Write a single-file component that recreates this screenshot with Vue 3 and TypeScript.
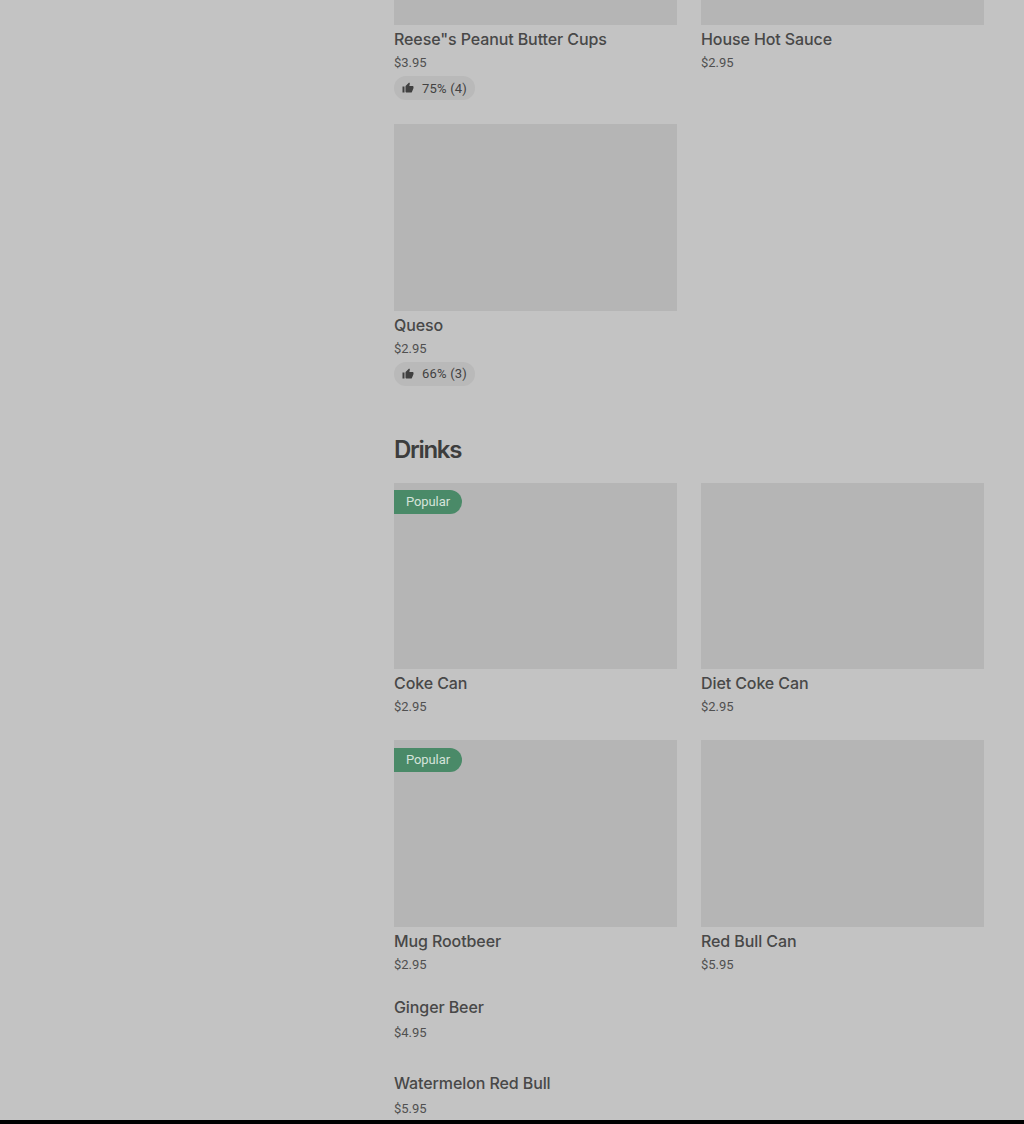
<script setup lang="ts">
interface MenuItem {
  name: string;
  price: string;
  popular?: boolean;
  rating?: string;
}

const snacks: MenuItem[] = [
  { name: 'Reese"s Peanut Butter Cups', price: '$3.95', rating: '75% (4)' },
  { name: 'House Hot Sauce', price: '$2.95' },
  { name: 'Queso', price: '$2.95', rating: '66% (3)' },
];

const drinks: MenuItem[] = [
  { name: 'Coke Can', price: '$2.95', popular: true },
  { name: 'Diet Coke Can', price: '$2.95' },
  { name: 'Mug Rootbeer', price: '$2.95', popular: true },
  { name: 'Red Bull Can', price: '$5.95' },
];

const plainDrinks: MenuItem[] = [
  { name: 'Ginger Beer', price: '$4.95' },
  { name: 'Watermelon Red Bull', price: '$5.95' },
];
</script>

<template>
  <div class="page">
    <main class="menu">
      <section class="grid">
        <article v-for="(item, i) in snacks" :key="item.name" class="card">
          <div class="photo" :class="{ cut: i < 2 }"></div>
          <h3 class="name">{{ item.name }}</h3>
          <p class="price">{{ item.price }}</p>
          <div v-if="item.rating" class="rating">
            <svg width="12" height="12" viewBox="0 0 24 24" fill="#404040">
              <path d="M1 21h4V9H1v12zm22-11c0-1.1-.9-2-2-2h-6.31l.95-4.57.03-.32c0-.41-.17-.79-.44-1.06L14.17 1 7.59 7.59C7.22 7.95 7 8.45 7 9v10c0 1.1.9 2 2 2h9c.83 0 1.54-.5 1.84-1.22l3.02-7.05c.09-.23.14-.47.14-.73v-2z" />
            </svg>
            <span>{{ item.rating }}</span>
          </div>
        </article>
      </section>

      <h2 class="heading">Drinks</h2>

      <section class="grid drinks">
        <article v-for="item in drinks" :key="item.name" class="card">
          <div class="photo">
            <span v-if="item.popular" class="badge">Popular</span>
          </div>
          <h3 class="name">{{ item.name }}</h3>
          <p class="price">{{ item.price }}</p>
        </article>
      </section>

      <section class="plain-list">
        <article v-for="item in plainDrinks" :key="item.name" class="plain">
          <h3 class="name">{{ item.name }}</h3>
          <p class="price">{{ item.price }}</p>
        </article>
      </section>
    </main>
  </div>
</template>

<style>
html,
body {
  margin: 0;
  background: #000;
}
</style>

<style scoped>
.page {
  height: 1120px;
  overflow: hidden;
  background: #c3c3c3;
  font-family: Roboto, "Liberation Sans", sans-serif;
  color: #424242;
}

.menu {
  width: 590px;
  margin-left: 394px;
}

.grid {
  display: grid;
  grid-template-columns: 283px 283px;
  column-gap: 24px;
  row-gap: 24px;
}

.drinks {
  row-gap: 25px;
}

.photo {
  position: relative;
  height: 186.75px;
  background: #b5b5b5;
}

.drinks .photo {
  height: 186.25px;
}

.photo.cut {
  height: 25px;
}

.name {
  margin: 4px 0 0;
  font-family: Inter, Roboto, sans-serif;
  font-size: 16px;
  line-height: 20px;
  font-weight: 500;
  letter-spacing: -0.1px;
  color: #484848;
}

.price {
  margin: 5px 0 0;
  font-size: 13px;
  line-height: 17.5px;
  color: #505050;
}

.rating {
  display: flex;
  width: fit-content;
  align-items: center;
  gap: 8px;
  height: 24px;
  margin-top: 4.5px;
  padding: 0 8px;
  border-radius: 12px;
  background: #b9b9b9;
  font-size: 13px;
  letter-spacing: 0.2px;
  color: #424242;
}

.badge {
  position: absolute;
  top: 7.7px;
  left: 0;
  height: 24px;
  padding: 0 12px;
  line-height: 24px;
  border-radius: 0 12px 12px 0;
  background: #4a8a68;
  color: #d5e3da;
  font-size: 13px;
  letter-spacing: -0.1px;
}

.heading {
  margin: 48.5px 0 16.35px;
  font-family: Inter, Roboto, sans-serif;
  font-size: 24px;
  line-height: 32px;
  font-weight: 600;
  letter-spacing: -1.3px;
  color: #3d3d3d;
}

.plain-list {
  margin-top: 23.5px;
}

.plain {
  height: 76px;
}

.plain .name {
  margin: 0;
}

.plain .price {
  margin-top: 7.5px;
}
</style>
